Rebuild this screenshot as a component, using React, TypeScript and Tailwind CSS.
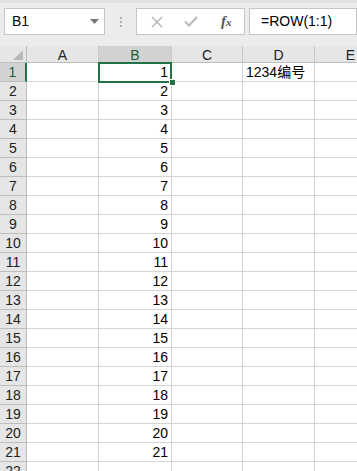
import React from "react";

const cols = ["A", "B", "C", "D", "E"];
const colW = [72, 73, 71, 72, 72];

export default function App() {
  const rows = Array.from({ length: 22 }, (_, i) => i + 1);
  return (
    <div
      className="relative w-[357px] h-[471px] overflow-hidden bg-white text-black"
      style={{ fontFamily: '"Liberation Sans", "Noto Sans CJK SC", sans-serif' }}
    >
      {/* formula bar */}
      <div className="h-[46px] bg-[#ececec] border-t-[3px] border-[#e0e0e0] flex items-start pt-[5px] pl-[4px]">
        <div className="w-[101px] shrink-0 h-[27px] bg-white border border-[#c6c6c6] flex items-center pl-[7px] pr-[5px] text-[14px]">
          <span className="flex-1">B1</span>
          <svg width="9" height="5" viewBox="0 0 9 5">
            <path d="M0 0 H9 L4.5 5 Z" fill="#777" />
          </svg>
        </div>
        <div className="w-[31px] shrink-0 h-[27px] flex flex-col items-center justify-center gap-[2px]">
          <div className="w-[2px] h-[2px] bg-[#b0b0b0]" />
          <div className="w-[2px] h-[2px] bg-[#b0b0b0]" />
          <div className="w-[2px] h-[2px] bg-[#b0b0b0]" />
        </div>
        <div className="w-[109px] shrink-0 h-[27px] bg-white border border-[#c6c6c6] flex items-center">
          <div className="w-[36px] flex justify-center pl-[4px]">
            <svg width="12" height="12" viewBox="0 0 12 12">
              <path d="M1 1 L11 11 M11 1 L1 11" stroke="#b8b8b8" strokeWidth="1.6" />
            </svg>
          </div>
          <div className="w-[36px] flex justify-center">
            <svg width="14" height="11" viewBox="0 0 14 11">
              <path d="M1 5.5 L5 9.5 L13 1" stroke="#b8b8b8" strokeWidth="2" fill="none" />
            </svg>
          </div>
          <div
            className="w-[36px] flex justify-center text-[15px] italic font-bold text-[#555]"
            style={{ fontFamily: '"Liberation Serif", serif' }}
          >
            <span>f</span>
            <span className="text-[11px] mt-[4px]">x</span>
          </div>
        </div>
        <div className="ml-[4px] flex-1 h-[27px] bg-white border border-[#c6c6c6] flex items-center pl-[11px] text-[14px]">
          =ROW(1:1)
        </div>
      </div>

      {/* sheet */}
      <div className="flex flex-col">
        {/* header row */}
        <div className="flex h-[17px] bg-[#e6e6e6] border-b border-[#bdbdbd]">
          <div className="w-[27px] shrink-0 border-r border-[#bdbdbd] relative">
            <svg className="absolute right-[3px] bottom-[2px]" width="10" height="10" viewBox="0 0 10 10">
              <path d="M10 0 V10 H0 Z" fill="#b8b8b8" />
            </svg>
          </div>
          {cols.map((c, i) => (
            <div
              key={c}
              style={{ width: colW[i] }}
              className={
                "shrink-0 border-r border-[#c8c8c8] flex items-center justify-center text-[14px] leading-none " +
                (c === "B" ? "bg-[#d2d2d2] text-[#1e5e3a] border-b-2 border-b-[#217346] h-[18px]" : "text-[#222]")
              }
            >
              <span className="mt-[1px]">{c}</span>
            </div>
          ))}
        </div>
        {rows.map((r) => (
          <div key={r} className="flex h-[19px] border-b border-[#d4d4d4]">
            <div
              className={
                "w-[27px] shrink-0 flex items-center justify-center text-[14px] leading-none border-b border-[#bdbdbd] -mb-px " +
                (r === 1
                  ? "bg-[#d2d2d2] text-[#1e5e3a] border-r-2 border-r-[#217346]"
                  : "bg-[#e6e6e6] text-[#222] border-r border-r-[#bdbdbd]")
              }
            >
              {r}
            </div>
            {cols.map((c, i) => (
              <div
                key={c}
                style={{ width: colW[i] }}
                className="shrink-0 border-r border-[#d4d4d4] flex items-center text-[14px] leading-none"
              >
                {c === "B" && r <= 21 && <span className="ml-auto pr-[3px]">{r}</span>}
                {c === "D" && r === 1 && (
                  <span className="pl-[3px]">1234编号</span>
                )}
              </div>
            ))}
          </div>
        ))}
      </div>

      {/* selection */}
      <div className="absolute left-[98px] top-[62px] w-[74px] h-[21px] border-2 border-[#217346]" />
      <div className="absolute left-[169px] top-[79px] w-[7px] h-[7px] bg-[#217346] border border-white" />
    </div>
  );
}
